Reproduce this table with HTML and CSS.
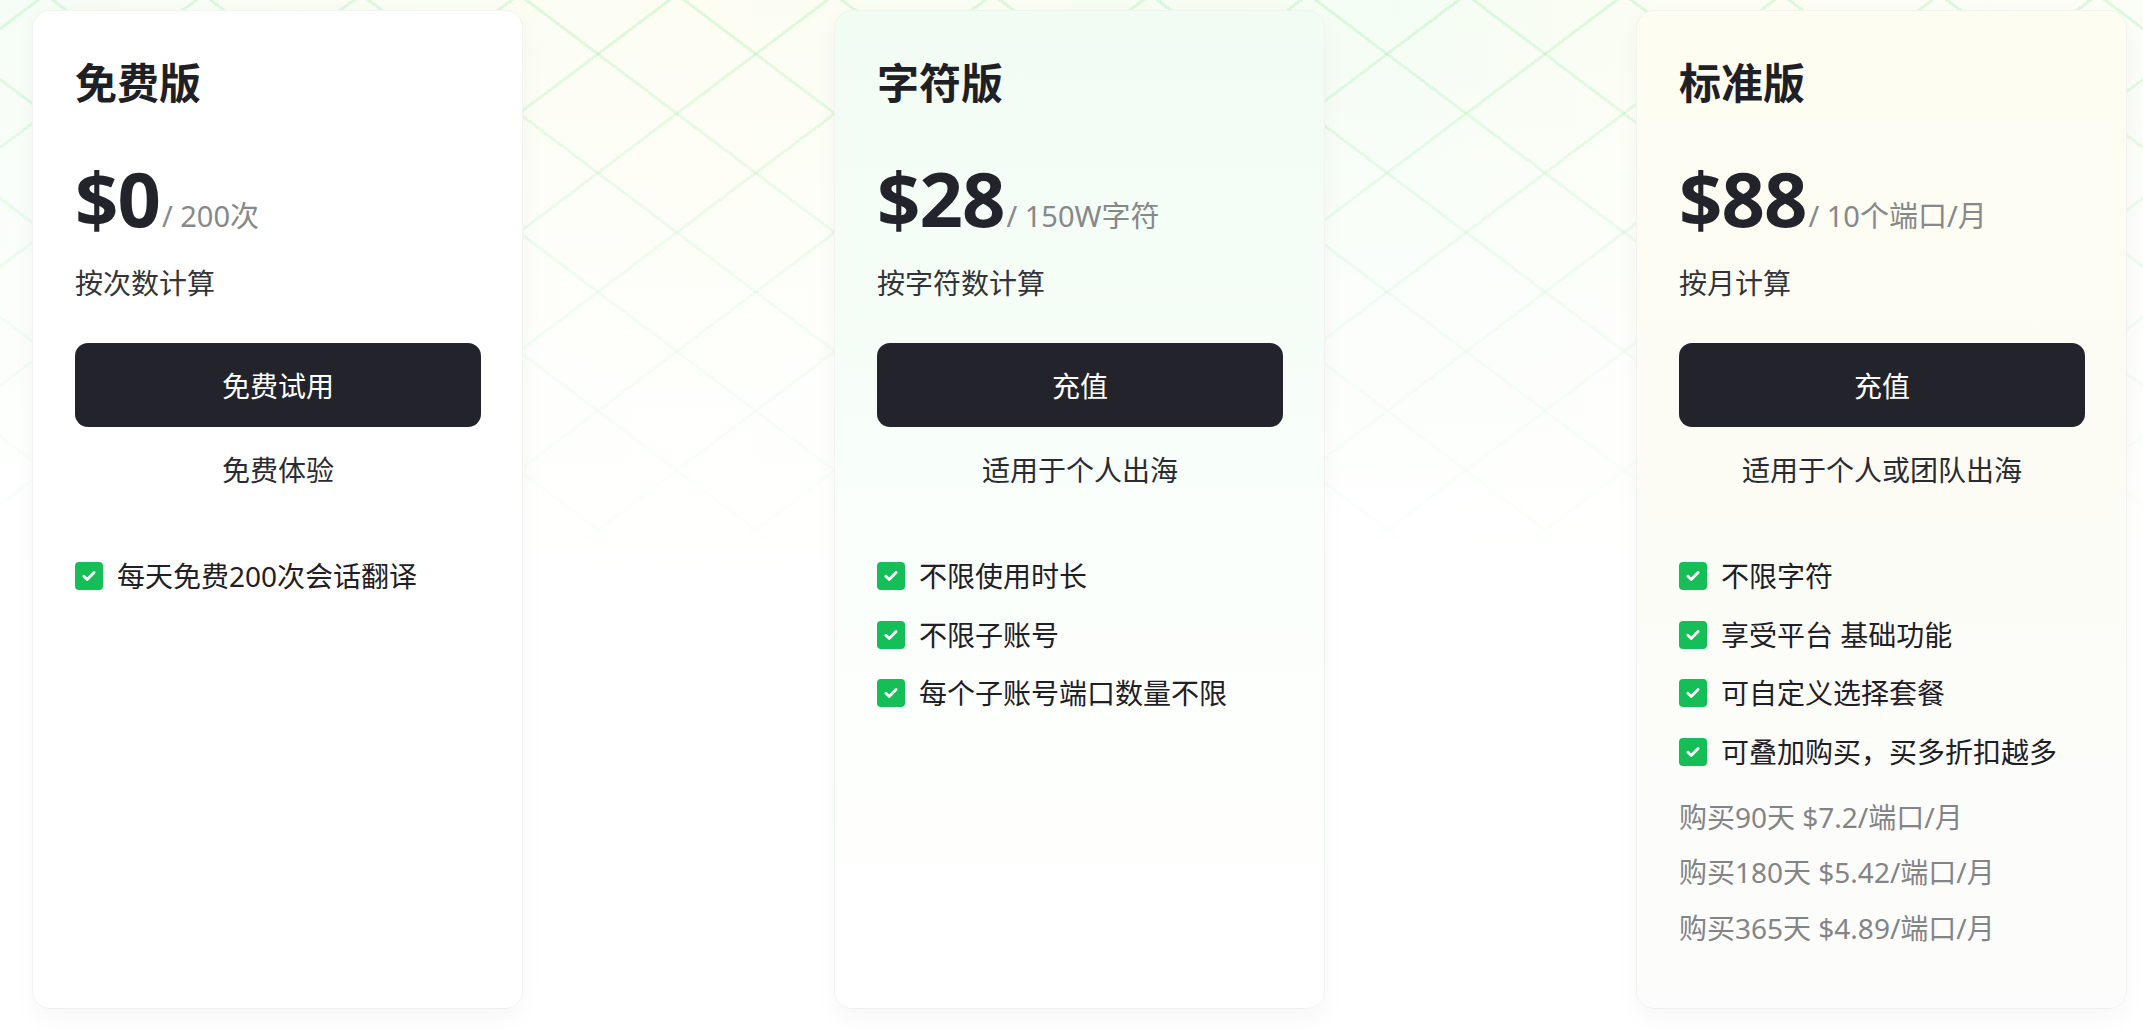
FILE: index.html
```html
<!DOCTYPE html>
<html lang="zh-CN">
<head>
<meta charset="utf-8">
<title>价格方案</title>
<link rel="stylesheet" href="styles.css">
</head>
<body>
<main class="page">
  <section class="plans">
    <article class="card card-free">
      <h2 class="plan-name">免费版</h2>
      <div class="price"><span class="amount">$0</span><span class="unit">/ 200次</span></div>
      <p class="billing">按次数计算</p>
      <button class="cta" type="button">免费试用</button>
      <p class="audience">免费体验</p>
      <ul class="features">
        <li class="feature"><span class="check"><svg viewBox="0 0 16 16" width="16" height="16"><path d="M3.4 8.2l3 2.9 6.1-6.2" fill="none" stroke="#fff" stroke-width="2.5" stroke-linecap="round" stroke-linejoin="round"/></svg></span>每天免费200次会话翻译</li>
      </ul>
    </article>

    <article class="card card-chars">
      <h2 class="plan-name">字符版</h2>
      <div class="price"><span class="amount">$28</span><span class="unit">/ 150W字符</span></div>
      <p class="billing">按字符数计算</p>
      <button class="cta" type="button">充值</button>
      <p class="audience">适用于个人出海</p>
      <ul class="features">
        <li class="feature"><span class="check"><svg viewBox="0 0 16 16" width="16" height="16"><path d="M3.4 8.2l3 2.9 6.1-6.2" fill="none" stroke="#fff" stroke-width="2.5" stroke-linecap="round" stroke-linejoin="round"/></svg></span>不限使用时长</li>
        <li class="feature"><span class="check"><svg viewBox="0 0 16 16" width="16" height="16"><path d="M3.4 8.2l3 2.9 6.1-6.2" fill="none" stroke="#fff" stroke-width="2.5" stroke-linecap="round" stroke-linejoin="round"/></svg></span>不限子账号</li>
        <li class="feature"><span class="check"><svg viewBox="0 0 16 16" width="16" height="16"><path d="M3.4 8.2l3 2.9 6.1-6.2" fill="none" stroke="#fff" stroke-width="2.5" stroke-linecap="round" stroke-linejoin="round"/></svg></span>每个子账号端口数量不限</li>
      </ul>
    </article>

    <article class="card card-std">
      <h2 class="plan-name">标准版</h2>
      <div class="price"><span class="amount">$88</span><span class="unit">/ 10个端口/月</span></div>
      <p class="billing">按月计算</p>
      <button class="cta" type="button">充值</button>
      <p class="audience">适用于个人或团队出海</p>
      <ul class="features">
        <li class="feature"><span class="check"><svg viewBox="0 0 16 16" width="16" height="16"><path d="M3.4 8.2l3 2.9 6.1-6.2" fill="none" stroke="#fff" stroke-width="2.5" stroke-linecap="round" stroke-linejoin="round"/></svg></span>不限字符</li>
        <li class="feature"><span class="check"><svg viewBox="0 0 16 16" width="16" height="16"><path d="M3.4 8.2l3 2.9 6.1-6.2" fill="none" stroke="#fff" stroke-width="2.5" stroke-linecap="round" stroke-linejoin="round"/></svg></span>享受平台 基础功能</li>
        <li class="feature"><span class="check"><svg viewBox="0 0 16 16" width="16" height="16"><path d="M3.4 8.2l3 2.9 6.1-6.2" fill="none" stroke="#fff" stroke-width="2.5" stroke-linecap="round" stroke-linejoin="round"/></svg></span>可自定义选择套餐</li>
        <li class="feature"><span class="check"><svg viewBox="0 0 16 16" width="16" height="16"><path d="M3.4 8.2l3 2.9 6.1-6.2" fill="none" stroke="#fff" stroke-width="2.5" stroke-linecap="round" stroke-linejoin="round"/></svg></span>可叠加购买，买多折扣越多</li>
      </ul>
      <ul class="tiers">
        <li>购买90天 $7.2/端口/月</li>
        <li>购买180天 $5.42/端口/月</li>
        <li>购买365天 $4.89/端口/月</li>
      </ul>
    </article>
  </section>
</main>
</body>
</html>
```

FILE: styles.css
```css
* {
  box-sizing: border-box;
}

html, body {
  margin: 0;
  padding: 0;
}

body {
  font-family: "Noto Sans", "Noto Sans CJK SC", sans-serif;
  color: #23242b;
  background: #ffffff;
}

.page {
  min-height: 1029px;
  background-color: #ffffff;
  background-image:
    linear-gradient(to bottom, rgba(255,255,255,0) 0px, rgba(255,255,255,0.6) 300px, #ffffff 580px),
    repeating-linear-gradient(37deg, rgba(255,255,255,0) 0px, rgba(255,255,255,0) 92px, rgba(120,228,135,0.22) 92px, rgba(120,228,135,0.22) 95px),
    repeating-linear-gradient(-37deg, rgba(255,255,255,0) 0px, rgba(255,255,255,0) 92px, rgba(120,228,135,0.22) 92px, rgba(120,228,135,0.22) 95px),
    linear-gradient(to right, #f6fdf6 0px, #fdfdf2 700px, #f4fdf4 1400px, #fdfdf3 1700px, #fbfdf7 2143px);
  padding: 10px 0 20px 32px;
}

.plans {
  display: flex;
  gap: 311px;
  align-items: stretch;
}

.card {
  width: 491px;
  height: 999px;
  border-radius: 18px;
  border: 1px solid #f1f3f1;
  padding: 44px 41px 0 42px;
  box-shadow: 0 10px 24px rgba(0, 0, 0, 0.035);
  display: flex;
  flex-direction: column;
}

.card-free {
  background: #ffffff;
}

.card-chars {
  background: linear-gradient(to bottom, #f1fcf3 0%, #f8fef9 45%, #fdfffd 75%, #ffffff 100%);
}

.card-std {
  background: linear-gradient(to bottom, #fdfdf1 0%, #fcfcf5 45%, #fcfcfa 80%, #fcfcfc 100%);
}

.plan-name {
  margin: 0;
  font-size: 42px;
  line-height: 56px;
  font-weight: 700;
  color: #1f2026;
}

.price {
  margin-top: 49px;
  display: flex;
  align-items: baseline;
  line-height: 1;
}

.amount {
  font-size: 76px;
  font-weight: 700;
  color: #23242b;
  letter-spacing: -1px;
}

.unit {
  font-size: 29px;
  color: #86888a;
  margin-left: 2px;
}

.billing {
  margin: 26px 0 0;
  font-size: 28px;
  line-height: 42px;
  color: #333438;
}

.cta {
  margin-top: 39px;
  width: 100%;
  height: 84px;
  border: none;
  border-radius: 13px;
  background: #23242b;
  color: #ffffff;
  font-family: inherit;
  font-size: 28px;
  font-weight: 400;
  cursor: pointer;
}

.audience {
  margin: 22px 0 0;
  text-align: center;
  font-size: 28px;
  line-height: 42px;
  color: #2a2b30;
}

.features {
  list-style: none;
  margin: 64px 0 0;
  padding: 0;
  display: flex;
  flex-direction: column;
  gap: 16.5px;
}

.feature {
  display: flex;
  align-items: center;
  gap: 14px;
  font-size: 28px;
  line-height: 42px;
  color: #1f2026;
}

.check {
  flex: none;
  width: 28px;
  height: 28px;
  border-radius: 4px;
  background: #16be58;
  display: flex;
  align-items: center;
  justify-content: center;
}

.check svg {
  width: 18px;
  height: 18px;
}

.tiers {
  list-style: none;
  margin: 17px 0 0;
  padding: 0;
}

.tiers li {
  font-size: 28px;
  line-height: 55.5px;
  color: #838486;
}
```
